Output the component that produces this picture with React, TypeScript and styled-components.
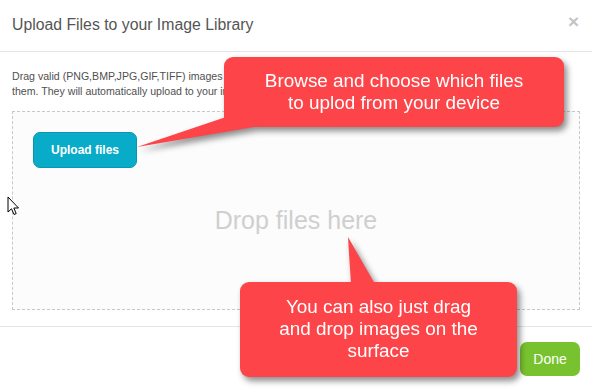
import React from "react";
import styled, { createGlobalStyle } from "styled-components";

const Global = createGlobalStyle`
  html, body { margin: 0; padding: 0; background: #ffffff; }
  body { font-family: "Liberation Sans", Arial, sans-serif; }
`;

const Modal = styled.div`
  position: relative;
  width: 592px;
  height: 388px;
  overflow: hidden;
  background: #fff;
  display: flex;
  flex-direction: column;
`;

const Header = styled.div`
  display: flex;
  align-items: center;
  justify-content: space-between;
  padding: 14px 13px 15px 12px;
  border-bottom: 1px solid #e5e5e5;
`;

const Title = styled.h4`
  margin: 0;
  font-size: 15.8px;
  line-height: 22px;
  font-weight: normal;
  color: #555;
`;

const Close = styled.span`
  font-size: 19px;
  font-weight: bold;
  line-height: 22px;
  color: #c4c4c4;
  margin-top: -6px;
`;

const Body = styled.div`
  padding: 17px 12px 16px 12px;
`;

const Intro = styled.p`
  margin: 0 0 12px 0;
  font-size: 10.6px;
  line-height: 15px;
  color: #505050;
`;

const Dropzone = styled.div`
  box-sizing: border-box;
  height: 199px;
  border: 1px dashed #c8c8c8;
  background: #fcfcfc;
  padding: 20px 20px;
  display: flex;
  flex-direction: column;
  align-items: flex-start;
`;

const UploadButton = styled.button`
  box-sizing: border-box;
  width: 104px;
  height: 36px;
  border: 1px solid #0896b0;
  border-radius: 7px;
  background: #08abc8;
  color: #fff;
  font-family: "Liberation Sans", Arial, sans-serif;
  font-weight: bold;
  font-size: 12px;
  padding: 0;
`;

const DropText = styled.div`
  align-self: stretch;
  text-align: center;
  margin-top: 38px;
  font-size: 25px;
  line-height: 28px;
  color: #cfcfcf;
`;

const Footer = styled.div`
  flex: 1;
  border-top: 1px solid #e5e5e5;
  padding: 15px 12px 0 12px;
  display: flex;
  justify-content: flex-end;
  align-items: flex-start;
`;

const DoneButton = styled.button`
  width: 60px;
  height: 34px;
  border: none;
  border-radius: 7px;
  background: #78c22f;
  color: #fff;
  font-family: "Liberation Sans", Arial, sans-serif;
  font-size: 14px;
  padding: 0;
`;

const Callout = styled.div<{ $left: number; $top: number; $width: number; $height: number }>`
  position: absolute;
  left: ${(p) => p.$left}px;
  top: ${(p) => p.$top}px;
  width: ${(p) => p.$width}px;
  height: ${(p) => p.$height}px;
  filter: drop-shadow(3px 4px 3px rgba(0, 0, 0, 0.45));
`;

const CalloutBox = styled.div<{ $padTop: number }>`
  box-sizing: border-box;
  width: 100%;
  height: 100%;
  background: #fd4448;
  border-radius: 9px;
  color: #fff;
  text-align: center;
  font-size: 18.9px;
  line-height: 22px;
  padding-top: ${(p) => p.$padTop}px;
`;

const Tail = styled.svg`
  position: absolute;
  left: 0;
  top: 0;
  overflow: visible;
`;

const Cursor = styled.svg`
  position: absolute;
  left: 7px;
  top: 196px;
`;

export default function App() {
  return (
    <>
      <Global />
      <Modal>
        <Header>
          <Title>Upload Files to your Image Library</Title>
          <Close>×</Close>
        </Header>
        <Body>
          <Intro>
            Drag valid (PNG,BMP,JPG,GIF,TIFF) images here or click the Upload files button to browse for
            <br />
            them. They will automatically upload to your image library.
          </Intro>
          <Dropzone>
            <UploadButton>Upload files</UploadButton>
            <DropText>Drop files here</DropText>
          </Dropzone>
        </Body>
        <Footer>
          <DoneButton>Done</DoneButton>
        </Footer>

        <Callout $left={224} $top={57} $width={340} $height={70}>
          <Tail width="1" height="1">
            <polygon points="2,60 -87,90 36,69" fill="#fd4448" />
          </Tail>
          <CalloutBox $padTop={13}>
            Browse and choose which files
            <br />
            to uplod from your device
          </CalloutBox>
        </Callout>

        <Callout $left={240} $top={282} $width={277} $height={95}>
          <Tail width="1" height="1">
            <polygon points="111,2 108,-45 135,2" fill="#fd4448" />
          </Tail>
          <CalloutBox $padTop={14}>
            You can also just drag
            <br />
            and drop images on the
            <br />
            surface
          </CalloutBox>
        </Callout>

        <Cursor width="13" height="21" viewBox="0 0 13 21">
          <path
            d="M1 1 L1 16 L4.5 12.8 L7 18.5 L9.2 17.6 L6.8 12 L11.5 12 Z"
            fill="#fff"
            stroke="#000"
            strokeWidth="1"
            strokeLinejoin="miter"
          />
        </Cursor>
      </Modal>
    </>
  );
}
